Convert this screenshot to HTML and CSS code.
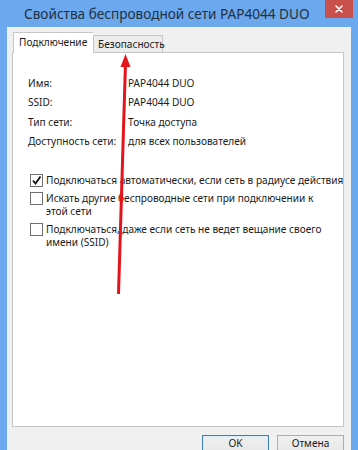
FILE: index.html
```html
<!DOCTYPE html>
<html lang="ru">
<head>
<meta charset="utf-8">
<link rel="stylesheet" href="styles.css">
</head>
<body>
<div class="window">
  <div class="titlebar">
    <span class="title">Свойства беспроводной сети PAP4044 DUO</span>
    <div class="close">
      <svg width="10" height="10" viewBox="0 0 10 10"><path d="M2 2 L8 8 M8 2 L2 8" stroke="#fff" stroke-width="1.6" stroke-linecap="round"/></svg>
    </div>
  </div>
  <div class="client">
    <div class="tabs">
      <div class="tab active">Подключение</div>
      <div class="tab">Безопасность</div>
    </div>
    <div class="panel">
      <div class="info">
        <div class="row"><span class="label">Имя:</span><span class="value">PAP4044 DUO</span></div>
        <div class="row"><span class="label">SSID:</span><span class="value">PAP4044 DUO</span></div>
        <div class="row"><span class="label">Тип сети:</span><span class="value">Точка доступа</span></div>
        <div class="row"><span class="label">Доступность сети:</span><span class="value">для всех пользователей</span></div>
      </div>
      <div class="checks">
        <div class="check">
          <span class="box checked"><svg width="11" height="11" viewBox="0 0 11 11"><path d="M2 5.5 L4.5 8.5 L9.5 1.5" fill="none" stroke="#111" stroke-width="1.8"/></svg></span>
          <span class="ctext">Подключаться автоматически, если сеть в радиусе действия</span>
        </div>
        <div class="check">
          <span class="box"></span>
          <span class="ctext">Искать другие беспроводные сети при подключении к<br>этой сети</span>
        </div>
        <div class="check">
          <span class="box"></span>
          <span class="ctext">Подключаться, даже если сеть не ведет вещание своего<br>имени (SSID)</span>
        </div>
      </div>
    </div>
    <div class="buttons">
      <div class="btn default">OK</div>
      <div class="btn">Отмена</div>
    </div>
  </div>
  <svg class="arrow" width="358" height="450" viewBox="0 0 358 450">
    <path d="M125.5 63 L118.5 294" stroke="#e3141b" stroke-width="3" fill="none"/>
    <path d="M125.5 54 L130.5 67 L120.5 67 Z" fill="#e3141b"/>
  </svg>
</div>
</body>
</html>
```

FILE: styles.css
```css
html, body {
  margin: 0;
  padding: 0;
}
body {
  width: 358px;
  height: 450px;
  overflow: hidden;
  font-family: "Noto Sans", "Open Sans", sans-serif;
  font-size: 10.1px;
  color: #1a1a1a;
}
.window {
  position: relative;
  width: 358px;
  height: 450px;
  box-sizing: border-box;
  background: #6ba8ee;
  padding: 0 7px;
  display: flex;
  flex-direction: column;
}
.titlebar {
  height: 27px;
  display: flex;
  align-items: center;
  padding-left: 17px;
  position: relative;
  flex: none;
}
.title {
  font-size: 13.6px;
  color: #23313f;
  margin-top: -1px;
}
.close {
  position: absolute;
  top: 0;
  right: -2px;
  width: 28px;
  height: 18px;
  background: #c9504a;
  display: flex;
  align-items: center;
  justify-content: center;
}
.client {
  flex: 1;
  background: #f0f0f0;
  padding: 6px 7px 0 5px;
  display: flex;
  flex-direction: column;
}
.tabs {
  display: flex;
  align-items: flex-end;
  padding-left: 1px;
  height: 20px;
  position: relative;
  z-index: 1;
  margin-bottom: -1px;
  flex: none;
}
.tab {
  box-sizing: border-box;
  height: 17px;
  width: 70px;
  padding: 0 0 0 4px;
  border: 1px solid #c6c6c6;
  border-bottom: none;
  background: #ececec;
  display: flex;
  align-items: center;
  margin-bottom: 1px;
}
.tab.active {
  height: 21px;
  width: 80px;
  padding-left: 5px;
  background: #fff;
  margin-bottom: 0;
  border-right: none;
  padding-bottom: 2px;
}
.panel {
  height: 375px;
  flex: none;
  box-sizing: border-box;
  background: #fff;
  border: 1px solid #c6c6c6;
  padding: 20px 0 0 15px;
}
.row {
  display: flex;
  height: 19.5px;
  align-items: center;
}
.label {
  width: 100px;
  flex: none;
}
.checks {
  margin-top: 23px;
  padding-left: 2px;
  display: flex;
  flex-direction: column;
  gap: 5px;
}
.check {
  display: flex;
  align-items: flex-start;
  line-height: 13px;
}
.box {
  width: 11px;
  height: 11px;
  border: 1px solid #707070;
  background: #fff;
  flex: none;
  margin-right: 3px;
  display: flex;
  align-items: center;
  justify-content: center;
}
.ctext {
  white-space: nowrap;
}
.buttons {
  display: flex;
  justify-content: flex-end;
  gap: 8px;
  margin-top: 8px;
  flex: none;
}
.btn {
  width: 67px;
  height: 23px;
  box-sizing: border-box;
  border: 1px solid #acacac;
  background: linear-gradient(#f0f0f0, #e5e5e5);
  display: flex;
  align-items: flex-start;
  justify-content: center;
  padding-top: 1px;
  line-height: 13px;
}
.btn.default {
  border-color: #3c7fb1;
  box-shadow: inset 0 0 0 1px #d6ecf8;
}
.arrow {
  position: absolute;
  left: 0;
  top: 0;
  pointer-events: none;
}
```
